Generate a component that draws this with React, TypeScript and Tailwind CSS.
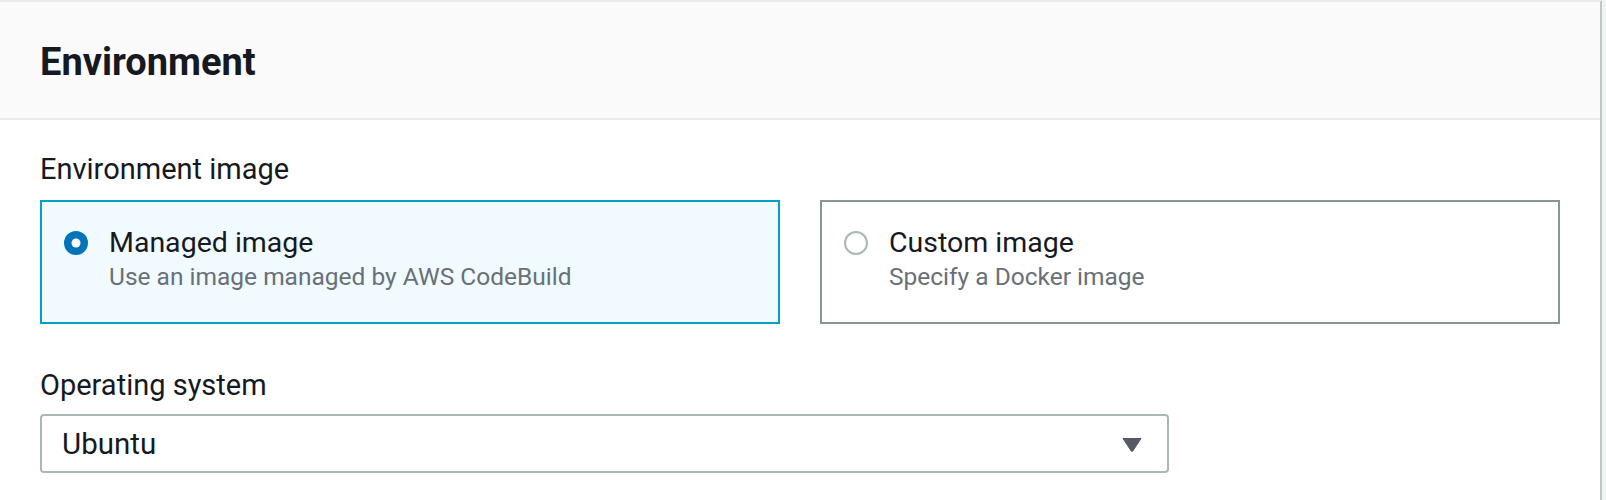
import { ChangeEvent, useState } from 'react'

type ImageKind = 'managed' | 'custom'

const IMAGE_OPTIONS: { value: ImageKind; title: string; hint: string }[] = [
  { value: 'managed', title: 'Managed image', hint: 'Use an image managed by AWS CodeBuild' },
  { value: 'custom', title: 'Custom image', hint: 'Specify a Docker image' },
]

const FONT = "font-['Roboto','Liberation_Sans',sans-serif]"

export default function App() {
  const [kind, setKind] = useState<ImageKind>('managed')
  const [os, setOs] = useState('Ubuntu')

  return (
    <div className={`min-h-[500px] w-[1606px] bg-[#f2f3f3] ${FONT}`}>
      <div className="min-h-[500px] w-[1602px] border-t-2 border-r-2 border-t-[#eaeded] border-r-[#bfc8c8] bg-white">
        {/* Panel header */}
        <div className="flex h-[118px] items-center border-b-2 border-[#eaeded] bg-[#fafafa] pt-[3px] pl-[40px]">
          <h2 className="text-[38px] font-bold leading-[44px] text-[#16191f]">Environment</h2>
        </div>

        <div className="px-[40px] pt-[27px]">
          <div className="text-[29px] leading-[44px] text-[#16191f]">Environment image</div>

          <div className="mt-[9px] grid w-[1520px] grid-cols-2 gap-[40px]">
            {IMAGE_OPTIONS.map((opt) => (
              <Tile
                key={opt.value}
                title={opt.title}
                hint={opt.hint}
                selected={kind === opt.value}
                onSelect={() => setKind(opt.value)}
              />
            ))}
          </div>

          <div className="mt-[39px] text-[29px] leading-[44px] text-[#16191f]">Operating system</div>

          <div className="relative mt-[7px] w-[1129px]">
            <select
              value={os}
              onChange={(e: ChangeEvent<HTMLSelectElement>) => setOs(e.target.value)}
              className="h-[59px] w-full appearance-none rounded-[4px] border-2 border-[#aab7b8] bg-white pt-[2px] pl-[20px] pr-[60px] text-[29.5px] text-[#16191f] outline-none"
            >
              <option>Ubuntu</option>
              <option>Amazon Linux 2</option>
              <option>Windows Server 2019</option>
            </select>
            <svg
              viewBox="0 0 20 15"
              className="pointer-events-none absolute top-[23px] right-[27px] h-[15px] w-[20px]"
            >
              <path d="M1 1.5 L19 1.5 L10.8 14 Q10 15 9.2 14 Z" fill="#545b64" stroke="#545b64" strokeWidth="1" strokeLinejoin="round" />
            </svg>
          </div>
        </div>
      </div>
    </div>
  )
}

function Tile({
  title,
  hint,
  selected,
  onSelect,
}: {
  title: string
  hint: string
  selected: boolean
  onSelect: () => void
}) {
  return (
    <button
      type="button"
      onClick={onSelect}
      className={`flex h-[124px] items-start border-2 pt-[23px] pl-[22px] text-left ${
        selected ? 'border-[#00a1c9] bg-[#f1faff]' : 'border-[#879596] bg-white'
      }`}
    >
      <span className="mt-[6px] flex h-[24px] w-[24px] shrink-0 items-center justify-center">
        {selected ? (
          <svg viewBox="0 0 24 24" className="h-[24px] w-[24px]">
            <circle cx="12" cy="12" r="12" fill="#0073bb" />
            <circle cx="12" cy="12" r="4.5" fill="#ffffff" />
          </svg>
        ) : (
          <svg viewBox="0 0 24 24" className="h-[24px] w-[24px]">
            <circle cx="12" cy="12" r="11" fill="#ffffff" stroke="#aab7b8" strokeWidth="2" />
          </svg>
        )}
      </span>
      <span className="ml-[21px] flex flex-col">
        <span className="text-[28.5px] leading-[36px] text-[#16191f]">{title}</span>
        <span className="text-[24.5px] leading-[32px] text-[#687078]">{hint}</span>
      </span>
    </button>
  )
}
